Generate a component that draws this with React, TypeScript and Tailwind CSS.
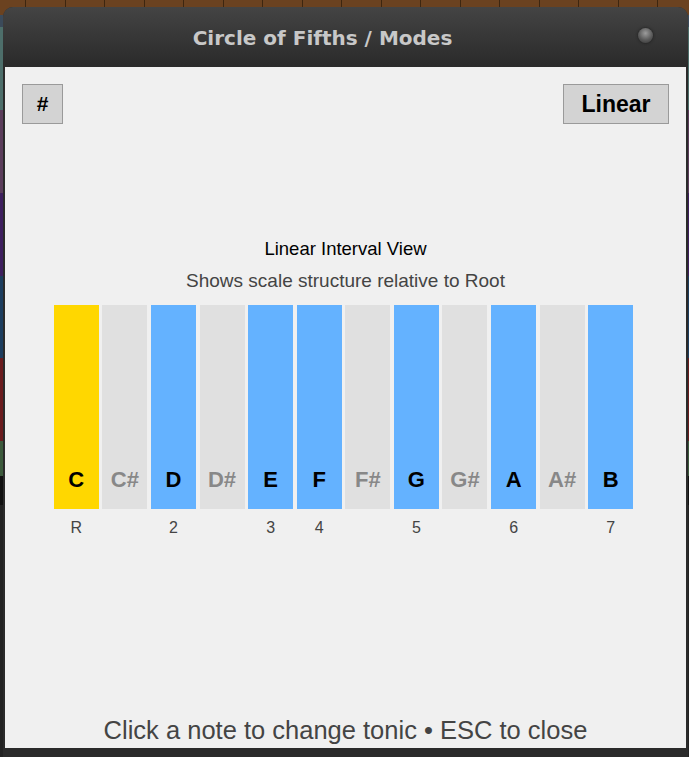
const NOTES = [
  { n: "C", kind: "root", iv: "R" },
  { n: "C#", kind: "off", iv: "" },
  { n: "D", kind: "on", iv: "2" },
  { n: "D#", kind: "off", iv: "" },
  { n: "E", kind: "on", iv: "3" },
  { n: "F", kind: "on", iv: "4" },
  { n: "F#", kind: "off", iv: "" },
  { n: "G", kind: "on", iv: "5" },
  { n: "G#", kind: "off", iv: "" },
  { n: "A", kind: "on", iv: "6" },
  { n: "A#", kind: "off", iv: "" },
  { n: "B", kind: "on", iv: "7" },
];

const keyClass: Record<string, string> = {
  root: "bg-[#ffd700] text-black",
  on: "bg-[#64b2ff] text-black",
  off: "bg-[#e0e0e0] text-[#888888]",
};

function Backdrop() {
  // stripes of the app behind the dialog
  return (
    <div className="flex flex-col w-full h-[757px]">
      <div className="h-[15px] bg-[#6b4220] flex">
        <div className="w-[26px] shrink-0 border-r border-[#3d2610]" />
        {Array.from({ length: 17 }).map((_, i) => (
          <div key={i} className="w-[39.5px] shrink-0 border-r border-[#3d2610]" />
        ))}
      </div>
      <div className="h-[12px] bg-[#3b4a5a]" />
      <div className="h-[83px] bg-[#4d6e6a]" />
      <div className="h-[83px] bg-[#5b3d5b]" />
      <div className="h-[83px] bg-[#3e1f5e]" />
      <div className="h-[82px] bg-[#1d3d5e]" />
      <div className="h-[83px] bg-[#6a1c1e]" />
      <div className="h-[35px] bg-[#3c5a3c]" />
      <div className="h-[29px] bg-[#111111]" />
      <div className="flex-1 bg-[#222222]" />
    </div>
  );
}

export default function App() {
  return (
    <div className="relative w-[689px] h-[757px] overflow-hidden font-['Liberation_Sans',Arial,sans-serif]">
      <Backdrop />

      <div className="absolute left-[3px] top-[7px] w-[685px] h-[760px] bg-[#2a2a2a] rounded-t-[10px] flex flex-col">
        <div className="h-[60px] shrink-0 rounded-t-[10px] bg-gradient-to-b from-[#444444] to-[#2a2a2a] flex items-center pr-[35px]">
          <div className="flex-1 pl-[4px] text-center text-[20px] font-bold text-[#c8c8c8] font-['DejaVu_Sans',sans-serif] pt-[2px]">
            Circle of Fifths / Modes
          </div>
          <div className="w-[15px] h-[15px] rounded-full bg-[radial-gradient(circle_at_50%_35%,#9c9c9c,#5a5a5a_55%,#333333)] shadow-[0_0_3px_#1a1a1a] -mt-[4px]" />
        </div>

        <div className="mx-[2px] h-[681px] bg-[#f0f0f0] flex flex-col px-[17px] pt-[17px] pb-[4px]">
          <div className="flex justify-between">
            <button className="w-[41px] h-[40px] bg-[#d3d3d3] border border-[#9a9a9a] text-[21px] font-bold text-black">
              #
            </button>
            <button className="w-[106px] h-[40px] bg-[#d3d3d3] border border-[#9a9a9a] text-[23px] font-bold text-black">
              Linear
            </button>
          </div>

          <div className="mt-[114px] text-center text-[18.5px] leading-[22px] text-black">Linear Interval View</div>
          <div className="mt-[10px] text-center text-[19px] leading-[22px] text-[#444444]">
            Shows scale structure relative to Root
          </div>

          <div className="mt-[13px] flex justify-center gap-[3.6px] pr-[4px]">
            {NOTES.map((k) => (
              <div key={k.n} className="w-[45px] flex flex-col items-center">
                <div
                  className={`w-[45px] h-[204px] flex items-end justify-center pb-[18px] text-[22px] leading-[22px] font-bold ${keyClass[k.kind]}`}
                >
                  {k.n}
                </div>
                <div className="mt-[9px] h-[20px] text-[16px] leading-[20px] text-[#444444]">{k.iv}</div>
              </div>
            ))}
          </div>

          <div className="flex-1" />
          <div className="text-center text-[25.5px] leading-[28px] text-[#444444]">
            Click a note to change tonic • ESC to close
          </div>
        </div>
      </div>
    </div>
  );
}
